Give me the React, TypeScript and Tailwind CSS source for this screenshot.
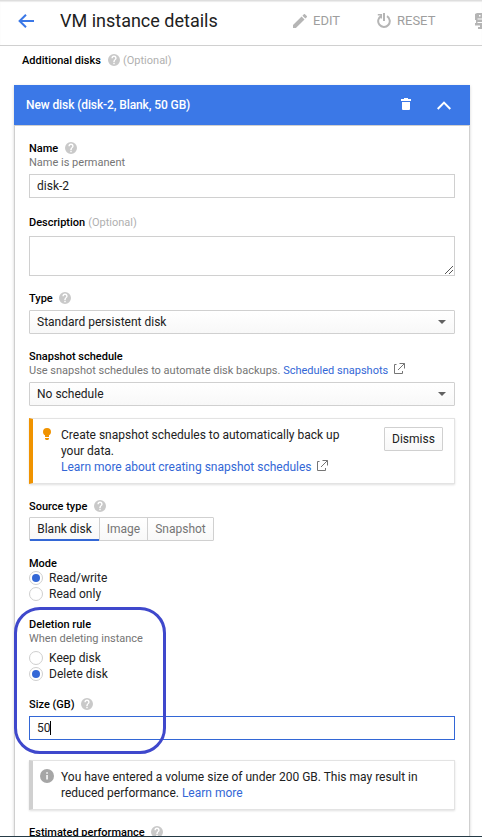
import React from 'react';

type Kids = { children: React.ReactNode };

const HelpIcon = ({ className = '' }: { className?: string }) => (
  <svg className={`shrink-0 ${className}`} width="12" height="12" viewBox="2 2 20 20" fill="#c9c9c9">
    <path fillRule="evenodd" d="M12 2a10 10 0 100 20 10 10 0 000-20zm1.2 17h-2.400v-2.400h2.400V19zm2.300-7.800l-1 1c-.8.8-1.300 1.500-1.300 3h-2.400v-.6c0-1.100.5-2.100 1.200-2.800l1.400-1.400c.4-.4.6-.9.600-1.400a2 2 0 00-4 0H7.700a4.300 4.300 0 018.600 0c0 .9-.4 1.700-.8 2.200z" />
  </svg>
);

const ExternalIcon = ({ className = '' }: { className?: string }) => (
  <svg className={`inline-block shrink-0 ${className}`} width="12" height="12" viewBox="0 0 12 12" fill="none" stroke="#757575">
    <path d="M3.500 1.500h-2v9h8v-2.500M6.500 .5h5v5M11.500 .5L5 7" />
  </svg>
);

const Label = ({ children, help, optional }: Kids & { help?: boolean; optional?: boolean }) => (
  <div className="flex h-[14px] items-center text-[11px] leading-[14px] font-medium text-black">
    <span className="pt-[2px]">{children}</span>
    {help && <HelpIcon className="ml-[6.5px]" />}
    {optional && <span className="ml-[3px] pt-[2px] font-normal text-[#b0b0b0]">(Optional)</span>}
  </div>
);

const Sub = ({ children }: Kids) => (
  <div className="flex h-[14px] items-center pt-[2px] text-[11px] leading-[14px] whitespace-pre text-[#757575]">{children}</div>
);

const Select = ({ children }: Kids) => (
  <div className="mt-[5px] flex h-6 items-center justify-between rounded-[1px] border border-[#d0d0d0] bg-gradient-to-b from-white to-[#f8f8f8] pr-2 pl-[7px] text-xs text-[#212121]">
    <span>{children}</span>
    <svg width="8" height="4" viewBox="0 0 8 4" fill="#616161"><path d="M0 0h8L4 4z" /></svg>
  </div>
);

const Radio = ({ children, checked }: Kids & { checked?: boolean }) => (
  <div className="flex h-4 items-center text-xs text-[#212121]">
    <span className="flex h-[14px] w-[14px] items-center justify-center rounded-full border border-[#cfcfcf] bg-white">
      {checked && <span className="h-2 w-2 rounded-full bg-[#3367d6]" />}
    </span>
    <span className="ml-[6px]">{children}</span>
  </div>
);

export default function App() {
  return (
    <div className="relative h-[837px] w-[482px] overflow-hidden bg-white font-['Roboto',sans-serif] text-xs text-[#212121]">
      <header className="flex h-[46px] items-center overflow-hidden border-t border-b border-t-[#dedede] border-b-[#d0d0d0] bg-white pb-[3px] shadow-[inset_0_1px_1px_#ececec]">
        <svg className="mb-px ml-[18px] shrink-0" width="16" height="14" viewBox="0 0 16 14" fill="none" stroke="#3b78e7" strokeWidth="2">
          <path d="M16 7H1.800M8 .7L1.600 7L8 13.300" />
        </svg>
        <h1 className="ml-[26px] w-[233px] shrink-0 pb-[2px] text-[18px] leading-6 whitespace-nowrap">VM instance details</h1>
        <svg className="mb-px shrink-0" width="14" height="14" viewBox="3 3 18 18" fill="#b5b5b5">
          <path d="M3 17.250V21h3.750L17.810 9.940l-3.750-3.750L3 17.250zM20.710 7.040a1 1 0 000-1.410l-2.340-2.340a1 1 0 00-1.410 0l-1.830 1.830 3.750 3.750 1.830-1.830z" />
        </svg>
        <span className="ml-[6px] w-[64px] shrink-0 pb-[2px] text-[13px] text-[#9e9e9e]">EDIT</span>
        <svg className="mb-[2px] shrink-0" width="14" height="15" viewBox="0 0 14 15" fill="none" stroke="#b5b5b5" strokeWidth="2">
          <path d="M4.300 3A5.800 5.800 0 1 0 10 3.200M7 0V8" />
          <path d="M.8 1.800H4.300V5.500" strokeWidth="1.500" />
        </svg>
        <span className="ml-[6px] w-[78px] shrink-0 pb-[2px] text-[13px] text-[#9e9e9e]">RESET</span>
        <svg className="mb-[2px] shrink-0" width="16" height="16" viewBox="0 0 16 16" fill="#b5b5b5">
          <path fillRule="evenodd" d="M2 0h12l1 1v11h-5v2h2v2H3v-2h2v-1.500H0V10h1V7H0V1zM4 2v1.500h1.500V2zM7 2v1.500h7V2zM2.500 5.500v1H14v-1zM2.500 9v1H14V9z" />
        </svg>
      </header>

      <main className="px-[14px]">
        <div className="flex h-[39px] items-center pb-[10px] pl-2">
          <span className="w-[79px] pt-px text-[11px] font-medium whitespace-nowrap text-black">Additional disks</span>
          <HelpIcon className="mb-px ml-[7px]" />
          <span className="ml-[3px] pt-px text-[11px] text-[#b0b0b0]">(Optional)</span>
        </div>

        <section className="h-[760px] w-[456px] shadow-[0_1px_3px_rgba(0,0,0,0.18)]">
          <div className="flex h-10 items-center bg-[#3b78e7] text-xs text-white">
            <span className="ml-3 w-[375px] font-medium tracking-[-0.1px]">New disk (disk-2, Blank, 50 GB)</span>
            <svg className="mb-[2px]" width="10" height="12" viewBox="0 0 10 12" fill="white">
              <path d="M3 0h4v1h3v2H0V1h3zM1 4h8v7a1 1 0 01-1 1H2a1 1 0 01-1-1z" />
            </svg>
            <svg className="ml-[26px]" width="14" height="9" viewBox="0 0 14 9" fill="none" stroke="white" strokeWidth="2">
              <path d="M.7 8L7 1.600L13.300 8" />
            </svg>
          </div>

          <div className="h-[720px] border border-[#cfcfcf] bg-white px-[14px] pt-[15px]">
            <Label help>Name</Label>
            <Sub>Name is permanent</Sub>
            <div className="mt-[5px] flex h-6 items-center border border-[#d0d0d0] pl-[7px]">disk-2</div>

            <div className="mt-[17px]"><Label optional>Description</Label></div>
            <div className="mt-[7px] flex h-10 items-end justify-end border border-[#d0d0d0] p-px">
              <svg width="8" height="8" viewBox="0 0 8 8" stroke="#555"><path d="M0 8L8 0M4 8L8 4" /></svg>
            </div>

            <div className="mt-[15px]"><Label help>Type</Label></div>
            <Select>Standard persistent disk</Select>

            <div className="mt-[15px]"><Label>Snapshot schedule</Label></div>
            <Sub>
              Use snapshot schedules to automate disk backups. <a className="text-[#3367d6]">Scheduled snapshots</a>
              <ExternalIcon className="mb-[5px] ml-[5px]" />
            </Sub>
            <Select>No schedule</Select>

            <div className="mt-3 flex h-[66px] border border-l-4 border-[#e3e3e3] border-l-[#f09300] pt-2 shadow-[0_1px_2px_rgba(0,0,0,0.12)]">
              <svg className="mt-px ml-[10px] shrink-0" width="8" height="12" viewBox="0 0 8 12" fill="#f09300">
                <path d="M4 0a4 4 0 014 4c0 1.500-.8 2.500-2 3.300V9H2V7.300C.8 6.500 0 5.500 0 4a4 4 0 014-4zM2 10h4v1L5 12H3L2 11z" />
              </svg>
              <div className="ml-[10px] w-[323px] shrink-0 text-xs leading-4">
                Create snapshot schedules to automatically back up<br />your data.<br />
                <a className="text-[#3367d6]">Learn more about creating snapshot schedules</a>
                <ExternalIcon className="mb-[3px] ml-1" />
              </div>
              <button className="h-6 w-[59px] rounded-[1px] border border-[#d0d0d0] bg-gradient-to-b from-white to-[#f8f8f8] text-xs leading-none">Dismiss</button>
            </div>

            <div className="mt-[15px]"><Label help>Source type</Label></div>
            <div className="mt-1 flex h-6 w-[185px] rounded-[1px] border border-[#d0d0d0] bg-gradient-to-b from-white to-[#f8f8f8] text-xs leading-[22px] text-[#757575]">
              <div className="-mb-px w-[69px] border-b-2 border-[#3367d6] text-center text-[#212121]">Blank disk</div>
              <div className="w-[49px] border-x border-[#d0d0d0] text-center">Image</div>
              <div className="w-[65px] text-center">Snapshot</div>
            </div>

            <div className="mt-[15px]"><Label>Mode</Label></div>
            <Radio checked>Read/write</Radio>
            <Radio>Read only</Radio>

            <div className="mt-[15px]"><Label>Deletion rule</Label></div>
            <Sub>When deleting instance</Sub>
            <div className="h-[5px]" />
            <Radio>Keep disk</Radio>
            <Radio checked>Delete disk</Radio>

            <div className="mt-[15px]"><Label help>Size (GB)</Label></div>
            <div className="mt-[5px] flex h-6 items-center border border-[#3367d6] pl-[7px]">
              50<span className="-ml-px h-[14px] w-px bg-black" />
            </div>

            <div className="mt-5 flex h-[50px] border border-l-4 border-[#e3e3e3] border-l-[#d0d0d0] pt-2 shadow-[0_1px_2px_rgba(0,0,0,0.12)]">
              <svg className="ml-[7px] shrink-0" width="14" height="14" viewBox="0 0 14 14">
                <circle cx="7" cy="7" r="7" fill="#a6a6a6" />
                <path d="M6.300 3.200h1.500v1.500H6.300zM6.300 6h1.500v4.500H6.300z" fill="white" />
              </svg>
              <div className="ml-[7px] whitespace-nowrap text-xs leading-4">
                You have entered a volume size of under 200 GB. This may result in<br />
                reduced performance. <a className="text-[#3367d6]">Learn more</a>
              </div>
            </div>

            <div className="mt-[15px]"><Label help>Estimated performance</Label></div>
          </div>
        </section>
      </main>

      <div className="absolute top-[607px] left-[14px] h-[147px] w-[152px] rounded-[26px] border-[3px] border-[#3f48cc]" />
      <div className="absolute bottom-0 left-0 h-px w-full bg-[#263b46]" />
    </div>
  );
}
